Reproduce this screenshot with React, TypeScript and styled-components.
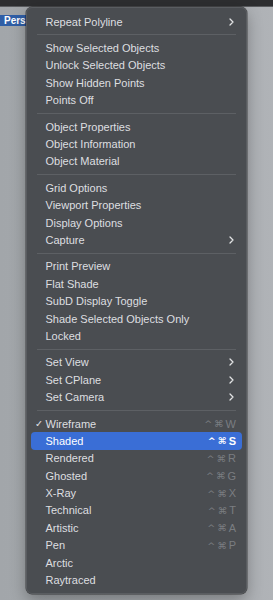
import React from "react";
import styled, { createGlobalStyle } from "styled-components";

const Global = createGlobalStyle`
  html, body { margin: 0; padding: 0; }
  body {
    width: 273px;
    height: 600px;
    overflow: hidden;
    font-family: "Liberation Sans", Arial, "DejaVu Sans", sans-serif;
    -webkit-font-smoothing: antialiased;
  }
`;

const Screen = styled.div`
  position: relative;
  width: 273px;
  height: 600px;
  display: flex;
  flex-direction: column;
  background: #a6aaae;
  overflow: hidden;
`;

const TopBar = styled.div`
  height: 6px;
  flex: none;
  background: #2d2e30;
  border-bottom: 1px solid #5a5c5f;
`;

const Viewport = styled.div`
  flex: 1;
  padding-top: 3px;
  background: linear-gradient(90deg, #a2a6aa 0%, #a8acb0 60%, #b0b3b7 100%);
`;

const ViewTab = styled.div`
  display: inline-block;
  height: 11px;
  line-height: 11px;
  padding: 0 1px 0 4px;
  background: #2f5ea6;
  color: #ffffff;
  font-size: 10px;
  font-weight: 700;
  white-space: nowrap;
`;

const Menu = styled.div`
  position: absolute;
  left: 26px;
  top: 7px;
  width: 221px;
  box-sizing: border-box;
  padding: 5px 4px 4px;
  background: #4a4d51;
  border: 1px solid #5a5d61;
  border-radius: 6px;
  box-shadow: 0 0 0 0.5px rgba(0, 0, 0, 0.55), 0 6px 16px rgba(0, 0, 0, 0.3);
  display: flex;
  flex-direction: column;
`;

const Row = styled.div<{ $active?: boolean }>`
  height: 17.4px;
  display: flex;
  align-items: center;
  padding: 0 6px 0 4px;
  border-radius: 4px;
  background: ${(p) => (p.$active ? "#3a6ed6" : "transparent")};
  color: ${(p) => (p.$active ? "#ffffff" : "#dedfe0")};
  font-size: 11px;
  white-space: nowrap;
`;

const Check = styled.span`
  width: 10.5px;
  flex: none;
  font-family: "DejaVu Sans", sans-serif;
  font-size: 9.5px;
  color: #dedfe0;
`;

const Label = styled.span`
  flex: 1;
`;

const Shortcut = styled.span<{ $active?: boolean }>`
  display: flex;
  align-items: center;
  gap: 2px;
  font-size: 11px;
  color: ${(p) => (p.$active ? "#ffffff" : "#7a7d81")};
  font-weight: ${(p) => (p.$active ? 700 : 400)};
`;

const Mod = styled.span`
  font-family: "DejaVu Sans", sans-serif;
  font-size: 9.5px;
`;

const Separator = styled.div`
  height: 9px;
  display: flex;
  align-items: center;
  padding: 0 6px;
  &::after {
    content: "";
    flex: 1;
    height: 1px;
    background: #5d6064;
  }
`;

const Chevron = () => (
  <svg width="5" height="8" viewBox="0 0 5 8" style={{ marginRight: 2 }}>
    <path d="M1 1 L4 4 L1 7" fill="none" stroke="#e2e3e4" strokeWidth="1.3" strokeLinecap="round" strokeLinejoin="round" />
  </svg>
);

type Item =
  | { sep: true }
  | { label: string; sub?: boolean; check?: boolean; key?: string; active?: boolean };

const items: Item[] = [
  { label: "Repeat Polyline", sub: true },
  { sep: true },
  { label: "Show Selected Objects" },
  { label: "Unlock Selected Objects" },
  { label: "Show Hidden Points" },
  { label: "Points Off" },
  { sep: true },
  { label: "Object Properties" },
  { label: "Object Information" },
  { label: "Object Material" },
  { sep: true },
  { label: "Grid Options" },
  { label: "Viewport Properties" },
  { label: "Display Options" },
  { label: "Capture", sub: true },
  { sep: true },
  { label: "Print Preview" },
  { label: "Flat Shade" },
  { label: "SubD Display Toggle" },
  { label: "Shade Selected Objects Only" },
  { label: "Locked" },
  { sep: true },
  { label: "Set View", sub: true },
  { label: "Set CPlane", sub: true },
  { label: "Set Camera", sub: true },
  { sep: true },
  { label: "Wireframe", check: true, key: "W" },
  { label: "Shaded", key: "S", active: true },
  { label: "Rendered", key: "R" },
  { label: "Ghosted", key: "G" },
  { label: "X-Ray", key: "X" },
  { label: "Technical", key: "T" },
  { label: "Artistic", key: "A" },
  { label: "Pen", key: "P" },
  { label: "Arctic" },
  { label: "Raytraced" },
];

export default function App() {
  return (
    <>
      <Global />
      <Screen>
        <TopBar />
        <Viewport>
          <ViewTab>Pers</ViewTab>
        </Viewport>
        <Menu>
          {items.map((it, i) =>
            "sep" in it ? (
              <Separator key={i} />
            ) : (
              <Row key={i} $active={it.active}>
                <Check>{it.check ? "✓" : ""}</Check>
                <Label>{it.label}</Label>
                {it.key && (
                  <Shortcut $active={it.active}>
                    <Mod>^</Mod>
                    <Mod>⌘</Mod>
                    <span>{it.key}</span>
                  </Shortcut>
                )}
                {it.sub && <Chevron />}
              </Row>
            )
          )}
        </Menu>
      </Screen>
    </>
  );
}
